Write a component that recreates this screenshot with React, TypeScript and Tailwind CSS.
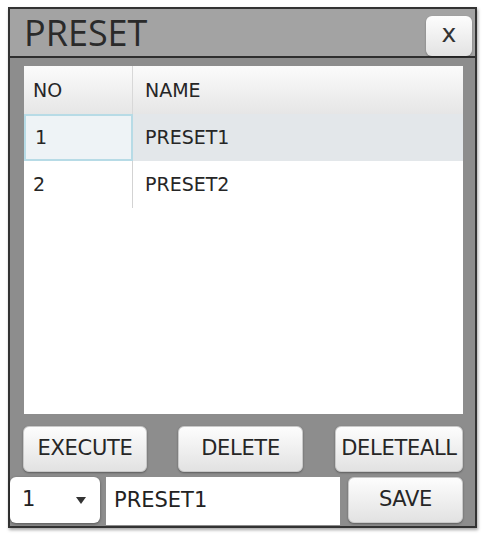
const dejavu = { fontFamily: '"DejaVu Sans", Verdana, sans-serif' };
const open = { fontFamily: '"Open Sans", "Noto Sans", sans-serif' };

function Btn({ label, className }: { label: string; className: string }) {
  return (
    <button
      className={`flex items-center justify-center rounded-[6px] border border-[#c9c9c9] bg-gradient-to-b from-[#fdfdfd] to-[#e2e2e2] text-[21px] tracking-[-0.3px] text-[#262626] shadow-[0_1px_2px_rgba(0,0,0,0.35)] ${className}`}
    >
      {label}
    </button>
  );
}

export default function App() {
  const rows = [
    { no: "1", name: "PRESET1", selected: true },
    { no: "2", name: "PRESET2", selected: false },
  ];

  return (
    <div className="h-[534px] w-[484px] bg-white pl-[8px] pt-[7px]" style={dejavu}>
      <div className="flex h-[521px] w-[469px] flex-col border-2 border-[#333] shadow-[1px_2px_3px_rgba(0,0,0,0.35)]">
        {/* title bar */}
        <div className="flex h-[49px] items-center justify-between border-b-2 border-[#2e2e2e] bg-[#a3a3a3] pl-[14px] pr-[3px]">
          <span className="text-[36px] leading-none text-[#2a2a2a]" style={open}>
            PRESET
          </span>
          <button className="mt-[6px] flex h-[40px] w-[46px] items-center justify-center rounded-[6px] bg-gradient-to-b from-[#fdfdfd] to-[#e3e3e3] pb-[3px] text-[25px] text-[#333] shadow-[0_1px_2px_rgba(0,0,0,0.3)]">
            x
          </button>
        </div>

        {/* body */}
        <div className="flex flex-1 flex-col bg-[#8d8d8d]">
          <div className="ml-[14px] mt-[8px] flex h-[348px] w-[439px] flex-col bg-white">
            <div className="flex h-[48px] bg-gradient-to-b from-[#fbfbfb] to-[#e6e6e6] text-[19px] text-[#262626]">
              <div className="flex w-[109px] items-center border-r border-[#d8d8d8] pl-[9px]">NO</div>
              <div className="flex flex-1 items-center pl-[12px]">NAME</div>
            </div>
            {rows.map((r) => (
              <div
                key={r.no}
                className={`flex h-[47px] text-[19px] text-[#262626] ${r.selected ? "bg-[#e3e7ea]" : "bg-white"}`}
              >
                <div
                  className={`flex w-[109px] items-center pl-[9px] ${
                    r.selected
                      ? "border-2 border-[#b7dbe6] bg-[#eef3f6]"
                      : "border-r border-[#d3d3d3]"
                  }`}
                >
                  {r.no}
                </div>
                <div className="flex flex-1 items-center pl-[12px]">{r.name}</div>
              </div>
            ))}
          </div>

          <div className="ml-[13px] mt-[12px] flex h-[46px]">
            <Btn label="EXECUTE" className="w-[124px]" />
            <Btn label="DELETE" className="ml-[31px] w-[125px]" />
            <Btn label="DELETEALL" className="ml-[32px] w-[128px]" />
          </div>

          <div className="mt-[5px] flex h-[48px]">
            <div className="flex h-[46px] w-[90px] items-center justify-between rounded-[6px] bg-white pl-[12px] pr-[14px] text-[21px] text-[#222] shadow-[0_1px_3px_rgba(0,0,0,0.4)]">
              <span>1</span>
              <svg width="10" height="7" viewBox="0 0 10 7">
                <path d="M0 0 H10 L5 7 Z" fill="#333" />
              </svg>
            </div>
            <div className="ml-[6px] flex h-[48px] w-[234px] items-center bg-white pl-[8px] text-[21px] text-[#222]">
              PRESET1
            </div>
            <Btn label="SAVE" className="ml-[8px] h-[46px] w-[115px]" />
          </div>
        </div>
      </div>
    </div>
  );
}
